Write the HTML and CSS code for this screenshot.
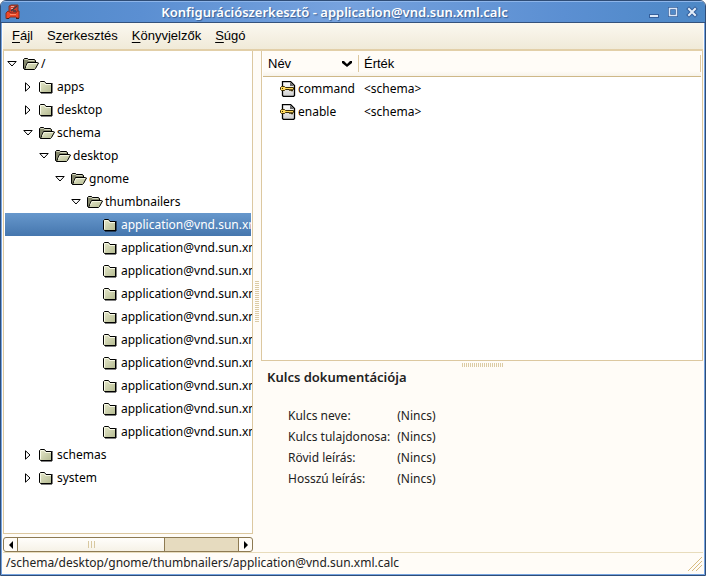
FILE: index.html
```
<!DOCTYPE html>
<html lang="hu">
<head>
    <meta charset="UTF-8">
    <meta name="viewport" content="width=device-width, initial-scale=1.0">
    <title>Konfigurációszerkesztő - application@vnd.sun.xml.calc</title>
    <link rel="stylesheet" href="styles.css">
</head>
<body>
    <svg class="defs" aria-hidden="true">
        <defs>
            <linearGradient id="folderFill" x1="0" y1="0" x2="1" y2="1">
                <stop offset="0" stop-color="#e6e8cc"/>
                <stop offset="1" stop-color="#b4ba90"/>
            </linearGradient>
            <linearGradient id="pageFill" x1="0" y1="0" x2="0" y2="1">
                <stop offset="0" stop-color="#fff"/>
                <stop offset="1" stop-color="#cfcfcf"/>
            </linearGradient>
        </defs>
        <symbol id="folder" viewBox="0 0 16 16">
            <path d="M.5 12.500V3.500L1.500 2.500H5.500L7 4.500H12.500V13.500H1.500Z" fill="url(#folderFill)" stroke="#000"/>
            <path d="M1.500 12V4L2 3.500H5L6.500 5.500H12" fill="none" stroke="#f8f9e6"/>
            <path d="M13 4V14H2" fill="none" stroke="#000"/>
        </symbol>
        <symbol id="folderOpen" viewBox="0 0 16 16">
            <path d="M1.500 13.500L.5 12.500V3.500L1.500 2.500H4.500L5.500 3.500H11.500L12.500 4.500V6.500" fill="#85886c" stroke="#000"/>
            <path d="M1.500 3.500H4.500L5.500 4.500H11" fill="none" stroke="#d6d8c0"/>
            <path d="M1.500 13.500L4.500 6.500H14.500L15.500 7L12.500 12.500L11.500 13.500Z" fill="url(#folderFill)" stroke="#000"/>
            <path d="M3.500 11L5 7.500H14" fill="none" stroke="#f4f5e0"/>
        </symbol>
        <symbol id="key" viewBox="0 0 16 16">
            <path d="M2.500 .5H10.500L14.500 4.500V14.500L13.500 15.500H3.500L2.500 14.500Z" fill="url(#pageFill)" stroke="#000" stroke-width="1.300"/>
            <path d="M10 1V5H14Z" fill="#666"/>
            <path d="M1.500 5.500H4.500L5.500 6.500H13.500V8.500H12.500V10H11.500V8.500H10.500V9.500H9.500V8.500H5.500L4.500 9.500H1.500L.5 8.500V6.500Z" fill="#ffd95c" stroke="#3c2e08"/>
            <path d="M2 7H3V8H2Z" fill="#3c2e08"/>
        </symbol>
        <symbol id="open" viewBox="0 0 10 10">
            <path d="M.8 2.500H9.200L5 7Z" fill="#fff" stroke="#000"/>
        </symbol>
        <symbol id="closed" viewBox="0 0 10 10">
            <path d="M2.500 .8V9.200L7 5Z" fill="#fff" stroke="#000"/>
        </symbol>
    </svg>

    <div class="window">
        <header class="titlebar">
            <svg class="app-icon" viewBox="0 0 16 16" aria-hidden="true">
                <path d="M4 2L6 1H13V9L11 10L4 9Z" fill="#cf4030" stroke="#7a3428"/>
                <path d="M1 9L3 7L6 9H11L12 7H14V14H12L11 13H5L4 14.500H1Z" fill="#f04828" stroke="#8a2c1c"/>
                <path d="M5 10.500H11" stroke="#ff8a68"/>
                <path d="M6 7L12 2M8 7H11" stroke="#3c3c44" stroke-width="1.500"/>
                <path d="M6 2.500H9M6 4.500H8" stroke="#e8a89c"/>
                <path d="M2 14H4V15H2ZM11 14H14V15H11Z" fill="#3c2420"/>
            </svg>
            <h1>Konfigurációszerkesztő - application@vnd.sun.xml.calc</h1>
            <div class="window-buttons">
                <button type="button" aria-label="Minimalizálás"><svg viewBox="0 0 12 12"><path d="M1 8H11V12H1Z" fill="#345f9b"/><path d="M2 9H10V11H2Z" fill="#dce8f8"/></svg></button>
                <button type="button" aria-label="Maximalizálás"><svg viewBox="0 0 12 12"><path d="M2.500 2.500H9.500V9.500H2.500Z" fill="none" stroke="#345f9b" stroke-width="3"/><path d="M2.500 2.500H9.500V9.500H2.500Z" fill="none" stroke="#dce8f8" stroke-width="1.500"/></svg></button>
                <button type="button" aria-label="Bezárás"><svg viewBox="0 0 12 12"><path d="M3 3L9 9M9 3L3 9" stroke="#345f9b" stroke-width="4" stroke-linecap="square"/><path d="M3 3L9 9M9 3L3 9" stroke="#e4eefa" stroke-width="2" stroke-linecap="square"/></svg></button>
            </div>
        </header>

        <nav class="menubar">
            <button type="button"><u>F</u>ájl</button>
            <button type="button">S<u>z</u>erkesztés</button>
            <button type="button"><u>K</u>önyvjelzők</button>
            <button type="button"><u>S</u>úgó</button>
        </nav>

        <main class="content">
            <section class="sidebar">
                <ul class="tree">
                    <li class="row level-0"><svg class="arrow"><use href="#open"/></svg><svg class="icon"><use href="#folderOpen"/></svg><span>/</span></li>
                    <li class="row level-1"><svg class="arrow"><use href="#closed"/></svg><svg class="icon"><use href="#folder"/></svg><span>apps</span></li>
                    <li class="row level-1"><svg class="arrow"><use href="#closed"/></svg><svg class="icon"><use href="#folder"/></svg><span>desktop</span></li>
                    <li class="row level-1"><svg class="arrow"><use href="#open"/></svg><svg class="icon"><use href="#folderOpen"/></svg><span>schema</span></li>
                    <li class="row level-2"><svg class="arrow"><use href="#open"/></svg><svg class="icon"><use href="#folderOpen"/></svg><span>desktop</span></li>
                    <li class="row level-3"><svg class="arrow"><use href="#open"/></svg><svg class="icon"><use href="#folderOpen"/></svg><span>gnome</span></li>
                    <li class="row level-4"><svg class="arrow"><use href="#open"/></svg><svg class="icon"><use href="#folderOpen"/></svg><span>thumbnailers</span></li>
                    <li class="row level-5 selected"><svg class="icon"><use href="#folder"/></svg><span>application@vnd.sun.xml.calc</span></li>
                    <li class="row level-5"><svg class="icon"><use href="#folder"/></svg><span>application@vnd.sun.xml</span></li>
                    <li class="row level-5"><svg class="icon"><use href="#folder"/></svg><span>application@vnd.sun.xml</span></li>
                    <li class="row level-5"><svg class="icon"><use href="#folder"/></svg><span>application@vnd.sun.xml</span></li>
                    <li class="row level-5"><svg class="icon"><use href="#folder"/></svg><span>application@vnd.sun.xml</span></li>
                    <li class="row level-5"><svg class="icon"><use href="#folder"/></svg><span>application@vnd.sun.xml</span></li>
                    <li class="row level-5"><svg class="icon"><use href="#folder"/></svg><span>application@vnd.sun.xml</span></li>
                    <li class="row level-5"><svg class="icon"><use href="#folder"/></svg><span>application@vnd.sun.xml</span></li>
                    <li class="row level-5"><svg class="icon"><use href="#folder"/></svg><span>application@vnd.sun.xml</span></li>
                    <li class="row level-5"><svg class="icon"><use href="#folder"/></svg><span>application@vnd.sun.xml</span></li>
                    <li class="row level-1"><svg class="arrow"><use href="#closed"/></svg><svg class="icon"><use href="#folder"/></svg><span>schemas</span></li>
                    <li class="row level-1"><svg class="arrow"><use href="#closed"/></svg><svg class="icon"><use href="#folder"/></svg><span>system</span></li>
                </ul>
                <div class="scrollbar">
                    <button type="button" aria-label="Balra"><svg viewBox="0 0 4 8"><path d="M4 0V8L0 4Z"/></svg></button>
                    <div class="track"><div class="thumb"><i></i><i></i><i></i></div></div>
                    <button type="button" aria-label="Jobbra"><svg viewBox="0 0 4 8"><path d="M0 0V8L4 4Z"/></svg></button>
                </div>
            </section>

            <div class="splitter vertical"><div class="grip"></div></div>

            <section class="details">
                <div class="list">
                    <table>
                        <thead>
                            <tr>
                                <th class="name"><div class="heading">Név<svg viewBox="0 0 10 7"><path d="M0 1H2L5 4L8 1H10V3L5 7L0 3Z"/></svg></div></th>
                                <th><div class="heading">Érték</div></th>
                            </tr>
                        </thead>
                        <tbody>
                            <tr>
                                <td class="name"><div class="row"><svg class="icon"><use href="#key"/></svg><span>command</span></div></td>
                                <td>&lt;schema&gt;</td>
                            </tr>
                            <tr>
                                <td class="name"><div class="row"><svg class="icon"><use href="#key"/></svg><span>enable</span></div></td>
                                <td>&lt;schema&gt;</td>
                            </tr>
                        </tbody>
                    </table>
                </div>
                <div class="splitter horizontal"><div class="grip"></div></div>
                <div class="docs">
                    <h2>Kulcs dokumentációja</h2>
                    <dl>
                        <dt>Kulcs neve:</dt><dd>(Nincs)</dd>
                        <dt>Kulcs tulajdonosa:</dt><dd>(Nincs)</dd>
                        <dt>Rövid leírás:</dt><dd>(Nincs)</dd>
                        <dt>Hosszú leírás:</dt><dd>(Nincs)</dd>
                    </dl>
                </div>
            </section>
        </main>

        <footer class="statusbar">
            <span>/schema/desktop/gnome/thumbnailers/application@vnd.sun.xml.calc</span>
            <svg class="resize" viewBox="0 0 16 16" aria-hidden="true"><path d="M1 15L15 1M5 15L15 5M9 15L15 9" stroke="#d8bc80" fill="none"/></svg>
        </footer>
    </div>
</body>
</html>
```
FILE: styles.css
```
* {
    box-sizing: border-box;
}
body {
    margin: 0;
    background-color: #fff;
    color: #000;
    font-family: "Noto Sans", sans-serif;
    font-size: 12px;
    line-height: 20px;
}
button {
    padding: 0;
    border: none;
    background: none;
    color: inherit;
    font: inherit;
}
svg {
    display: block;
    flex: none;
}
.defs {
    position: absolute;
    width: 0;
    height: 0;
}
.window {
    display: flex;
    flex-direction: column;
    height: 100vh;
    overflow: hidden;
    border: 1px solid #2f4d77;
    border-radius: 6px 6px 0 0;
    background-color: #fffcf7;
    box-shadow: inset 0 0 0 1px #75a3df;
    padding: 0 1px 2px;
}
.titlebar {
    display: flex;
    align-items: center;
    flex: none;
    height: 22px;
    margin: 0 -1px;
    padding: 0 7px 0 4px;
    border-top: 1px solid #8db5ea;
    border-bottom: 1px solid #34527c;
    background: linear-gradient(90deg, #5088c8, #5b8fd2 20%, #76a2de 48%, #5b8fd2 80%, #4d88c6);
    color: #fff;
}
.app-icon {
    width: 16px;
    height: 16px;
}
.titlebar h1 {
    flex: 1;
    margin: 0;
    overflow: hidden;
    font-size: 13px;
    font-weight: 600;
    text-align: center;
    text-shadow: 1px 1px 1px #3a5f93;
    white-space: nowrap;
}
.window-buttons {
    display: flex;
    gap: 7px;
}
.window-buttons svg {
    width: 12px;
    height: 12px;
}
.menubar {
    display: flex;
    flex: none;
    gap: 14px;
    height: 28px;
    margin: 0 1px;
    padding: 0 9px;
    border-bottom: 2px solid #e2cfa8;
    background: linear-gradient(#fbf8f0, #f0ead8);
    font-family: "Liberation Sans", Arial, sans-serif;
    font-size: 13px;
}
.menubar u {
    text-underline-offset: 2px;
}
.content {
    display: flex;
    flex: 1;
    min-height: 0;
    padding: 0 1px;
}
.sidebar {
    display: flex;
    flex: none;
    flex-direction: column;
    gap: 3px;
    width: 250px;
}
.tree {
    flex: 1;
    min-height: 0;
    margin: 0;
    overflow: hidden;
    padding: 1px 1px 0;
    border: 1px solid #dcc8a0;
    border-top: none;
    background-color: #fff;
    list-style: none;
}
.row {
    display: flex;
    align-items: center;
    gap: 2px;
    height: 23px;
    white-space: nowrap;
}
.arrow {
    width: 10px;
    height: 10px;
    margin-right: 4px;
}
.icon {
    width: 16px;
    height: 16px;
}
.level-0 {
    padding-left: 2px;
}
.level-1 {
    padding-left: 18px;
}
.level-2 {
    padding-left: 34px;
}
.level-3 {
    padding-left: 50px;
}
.level-4 {
    padding-left: 66px;
}
.level-5 {
    padding-left: 98px;
}
.selected {
    background: linear-gradient(#6798cc, #4576ae);
    color: #fff;
}
.scrollbar {
    display: flex;
    flex: none;
    height: 15px;
    border: 1px solid #8d7a52;
    border-radius: 3px;
    background-color: #fffcf7;
}
.scrollbar button {
    display: grid;
    place-items: center;
    width: 13px;
}
.scrollbar svg {
    width: 4px;
    height: 8px;
}
.track {
    flex: 1;
    border: solid #8d7a52;
    border-width: 0 1px;
    background-color: #e6dbbf;
}
.thumb {
    display: flex;
    align-items: center;
    justify-content: center;
    gap: 2px;
    width: 67%;
    height: 100%;
    border-right: 1px solid #8d7a52;
    background: linear-gradient(#fffefb, #f6f2e7);
}
.thumb i {
    width: 1px;
    height: 7px;
    background-color: #d8c8a0;
}
.splitter {
    display: grid;
    flex: none;
    place-items: center;
}
.vertical {
    width: 8px;
}
.vertical .grip {
    width: 4px;
    height: 41px;
    background: repeating-linear-gradient(#dccba4 0 1px, transparent 1px 2px);
}
.horizontal {
    height: 8px;
}
.horizontal .grip {
    width: 41px;
    height: 4px;
    background: repeating-linear-gradient(90deg, #dccba4 0 1px, transparent 1px 2px);
}
.details {
    display: flex;
    flex: 1;
    flex-direction: column;
    min-width: 0;
}
.list {
    flex: 1;
    min-height: 0;
    overflow: hidden;
    padding: 0 1px;
    border: 1px solid #dcc8a0;
    border-top: none;
    background-color: #fff;
}
table {
    width: 100%;
    border-spacing: 0;
    table-layout: fixed;
}
th {
    height: 26px;
    padding: 4px 0;
    border-bottom: 1px solid #ceb888;
    background: linear-gradient(#fffcf7 80%, #f7f3ea);
    font-family: "Liberation Sans", Arial, sans-serif;
    font-size: 13px;
    font-weight: normal;
    text-align: left;
}
td {
    height: 23px;
    padding: 0 5px;
}
th.name {
    width: 96px;
}
td.name {
    padding: 0 0 0 17px;
}
.heading {
    display: flex;
    align-items: center;
    justify-content: space-between;
    height: 17px;
    padding: 0 6px 0 5px;
    border-right: 1px solid #dcc8a0;
}
.heading svg {
    width: 10px;
    height: 7px;
}
.docs {
    flex: none;
    height: 183px;
    padding: 0 6px;
    color: #222;
}
.docs h2 {
    margin: 0;
    padding: 0 0 20px;
    font-size: 13px;
    font-weight: 600;
    line-height: 16px;
}
.docs dl {
    display: grid;
    grid-template-columns: max-content 1fr;
    gap: 0 7px;
    margin: 0;
    padding-left: 21px;
    line-height: 21px;
}
.docs dd {
    margin: 0;
}
.statusbar {
    display: flex;
    flex: none;
    justify-content: space-between;
    height: 21px;
    margin: 0 1px;
    padding-left: 3px;
    border-top: 1px solid #e8dcbc;
    color: #222;
}
.resize {
    width: 16px;
    height: 16px;
    margin-top: 3px;
}
```
